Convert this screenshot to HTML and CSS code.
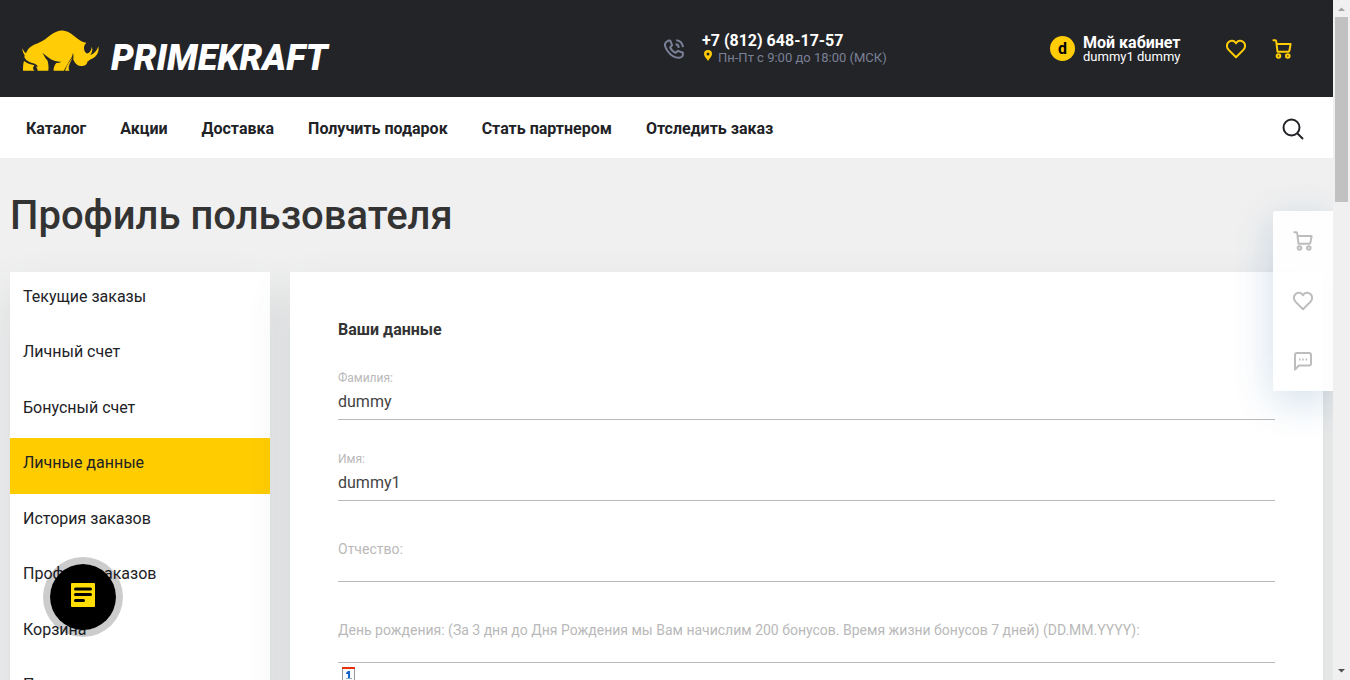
FILE: index.html
```html
<!DOCTYPE html>
<html lang="ru">
<head>
<meta charset="utf-8">
<meta name="viewport" content="width=device-width, initial-scale=1">
<title>Профиль пользователя</title>
<link rel="stylesheet" href="styles.css">
</head>
<body>
<svg class="sprite" aria-hidden="true">
  <symbol id="heart" viewBox="0 0 20 20"><path d="M10 18.3 2.6 10.9C.3 8.500.5 5 2.400 3.200 4.500 1.200 8 1.200 10 4.300c2-3.100 5.500-3.100 7.600-1.100 1.900 1.800 2.100 5.300-.2 7.700z"/></symbol>
  <symbol id="cart" viewBox="0 0 20 20"><path d="M.6 1.300H3.300Q4 1.300 4.200 2.300L5.500 12.700H16.300Q17.200 12.700 17.400 11.800L18.600 5H4.600"/><circle cx="6.500" cy="17" r="1.800"/><circle cx="15.800" cy="17" r="1.800"/></symbol>
</svg>
<div class="shell">
  <div class="page">
    <header class="topbar">
      <a class="logo" href="#">
        <svg class="rhino" viewBox="36 28 231 123" aria-hidden="true">
          <path d="M37 83C41 91 44 96 48 98C54 82 65 74 85 67C101 61 109 52 122 43C137 33 148 28 162 30C178 32 190 44 203 54C212 61 219 65 229 66C222 73 220 83 224 91C226 96 230 99 234 98C241 94 245 86 245 78C249 87 246 96 241 103C252 100 261 90 265 77C269 96 257 111 242 116L232 123C232 132 222 137 212 136C202 135 194 126 190 117C190 108 191 102 189 97C187 107 184 113 179 119C172 133 165 142 162 150H131C130 142 133 134 139 127C145 127 150 126 153 123C131 124 116 112 97 96C104 106 105 112 112 119C116 130 116 142 115 150H83C82 145 81 141 77 137L84 139C81 131 74 129 67 127C51 122 40 112 44 104C40 98 37 91 37 83Z"/>
          <path d="M42 121C50 128 62 131 73 134C70 139 68 142 70 146L73 150H39C39 141 39 130 42 121Z"/>
          <path d="M189 110C181 124 175 136 176 144L178 150H165C169 138 178 121 189 110Z"/>
        </svg>
        <span class="wordmark">PRIMEKRAFT</span>
      </a>
      <div class="contact">
        <svg class="icon-phone" viewBox="0 0 20 20" aria-hidden="true"><path d="M4.500 1.500 2 3.300C.2 5 1.200 8.500 3.400 11.800c2.600 3.800 7 7.200 12.100 7 1.500-.1 3.400-1.500 3.400-3v-2.100l-5-1.900-2.200 2c-2.300-1-4.800-3.500-5.500-5.500l1.900-2.100L6.300 1.700z"/><path d="M11.500 5.300q3 0 3.300 3.500M12.200 1.200q6 .6 6.800 7"/></svg>
        <div>
          <a class="phone" href="tel:+78126481757">+7 (812) 648-17-57</a>
          <div class="hours"><svg class="icon-pin" viewBox="0 0 8 11" aria-hidden="true"><path fill-rule="evenodd" d="M4 0a4 4 0 0 1 4 4c0 2.500-2.500 4.200-4 7C2.500 8.200 0 6.500 0 4a4 4 0 0 1 4-4zm0 2.400a1.500 1.500 0 1 0 0 3 1.500 1.500 0 0 0 0-3z"/></svg>Пн-Пт с 9:00 до 18:00 (МСК)</div>
        </div>
      </div>
      <a class="account" href="#">
        <span class="avatar">d</span>
        <span><strong class="account-title">Мой кабинет</strong><span class="account-name">dummy1 dummy</span></span>
      </a>
      <div class="shortcuts">
        <a href="#" aria-label="Избранное"><svg class="icon"><use href="#heart"/></svg></a>
        <a href="#" aria-label="Корзина"><svg class="icon"><use href="#cart"/></svg></a>
      </div>
    </header>
    <nav class="mainnav" aria-label="Главное меню">
      <a href="#">Каталог</a><a href="#">Акции</a><a href="#">Доставка</a><a href="#">Получить подарок</a><a href="#">Стать партнером</a><a href="#">Отследить заказ</a>
      <button class="search" type="button" aria-label="Поиск"><svg viewBox="0 0 22 22"><circle cx="9.500" cy="9.500" r="8"/><path d="m15.500 15.500 5.500 5.500"/></svg></button>
    </nav>
    <main class="content">
      <h1>Профиль пользователя</h1>
      <div class="columns">
        <nav class="side" aria-label="Личный кабинет">
          <a href="#">Текущие заказы</a>
          <a href="#">Личный счет</a>
          <a href="#">Бонусный счет</a>
          <a class="active" href="#">Личные данные</a>
          <a href="#">История заказов</a>
          <a href="#">Профили заказов</a>
          <a href="#">Корзина</a>
          <a href="#">Подписки</a>
        </nav>
        <form class="card">
          <h2>Ваши данные</h2>
          <div class="field"><label for="surname">Фамилия:</label><input id="surname" type="text" value="dummy"></div>
          <div class="field"><label for="name">Имя:</label><input id="name" type="text" value="dummy1"></div>
          <div class="field empty"><label for="middle">Отчество:</label><input id="middle" type="text"></div>
          <div class="field empty"><label for="birthday">День рождения: (За 3 дня до Дня Рождения мы Вам начислим 200 бонусов. Время жизни бонусов 7 дней) (DD.MM.YYYY):</label><input id="birthday" type="text"></div>
          <button class="calendar" type="button" aria-label="Выбрать дату"><svg viewBox="0 0 13 15"><path fill="#f8fafc" stroke="#999" d="M.5.5h12v14H.5z"/><path fill="#e8320c" d="M0 0h13v2H0z"/><path fill="#1462cc" d="M4 6l2-2h2v7H6V7H4z"/><path fill="#8fa9c8" d="M4 11h6v1H4z"/></svg></button>
        </form>
      </div>
    </main>
    <div class="dock">
      <a href="#" aria-label="Корзина"><svg class="icon"><use href="#cart"/></svg></a>
      <a href="#" aria-label="Избранное"><svg class="icon"><use href="#heart"/></svg></a>
      <button type="button" aria-label="Сообщения"><svg class="icon" viewBox="0 0 20 20"><path d="M2 18.500V4q0-2 2-2h12q2 0 2 2v8.500q0 2-2 2H6z"/><path d="M6 8.500h1.500M9.300 8.500h1.500M12.600 8.500h1.500"/></svg></button>
    </div>
    <button class="chat" type="button" aria-label="Чат"><svg viewBox="0 0 24 24"><rect width="24" height="24" rx="1"/><path d="M4.500 6h15M4.500 11.500h15M4.500 17.500h8"/></svg></button>
  </div>
  <div class="scrollbar" aria-hidden="true">
    <svg class="at-end" viewBox="0 0 17 17"><path d="M5 11 8.500 7.500 12 11z"/></svg>
    <span class="thumb"></span>
    <svg viewBox="0 0 17 17"><path d="M5 6h7L8.500 9.500z"/></svg>
  </div>
</div>
</body>
</html>
```
FILE: styles.css
```css
* { box-sizing: border-box; }
body { margin: 0; font: 16px/20px Roboto, sans-serif; color: #212226; background: #f0f0f0; }
a { color: inherit; text-decoration: none; }
button { border: 0; padding: 0; background: none; cursor: pointer; }
svg { display: block; }
.sprite { position: absolute; width: 0; height: 0; }
.shell { display: flex; height: 100vh; overflow: hidden; }
.page { position: relative; flex: 1; min-width: 0; overflow: hidden; }

.topbar { display: flex; align-items: center; height: 97px; padding: 0 41px 0 22px; background: #232428; color: #fff; }
.logo { display: flex; align-items: flex-end; gap: 12px; margin-top: 3px; flex: 1; }
.rhino { width: 77px; height: 41px; fill: #ffcc05; }
.wordmark { font: italic 900 36px/26px Roboto, sans-serif; }
.contact { display: flex; align-items: center; gap: 18px; width: 386px; }
.icon-phone { width: 20px; height: 20px; fill: none; stroke: #7a8096; stroke-width: 2; }
.phone { display: block; font-weight: 700; line-height: 18px; }
.hours { display: flex; align-items: center; gap: 6px; padding-left: 2px; font-size: 13px; line-height: 16px; color: #7a8096; }
.icon-pin { width: 8px; height: 11px; margin-bottom: 4px; fill: #ffcc05; }
.account { display: flex; align-items: center; gap: 8px; width: 176px; }
.avatar { width: 25px; height: 25px; border-radius: 50%; background: #ffcc05; color: #000; font-weight: 700; line-height: 25px; text-align: center; }
.account-title, .account-name { display: block; }
.account-title { line-height: 16px; }
.account-name { font-size: 13px; line-height: 12px; }
.shortcuts { display: flex; gap: 26px; color: #ffcc05; }
.icon { width: 20px; height: 20px; fill: none; stroke: currentColor; stroke-width: 2; stroke-linejoin: round; }

.mainnav { display: flex; align-items: center; gap: 34px; height: 61px; padding: 2px 29px 0 26px; background: #fff; font-weight: 700; }
.search { margin-left: auto; }
.search svg { width: 22px; height: 22px; fill: none; stroke: #212226; stroke-width: 2; }

.content { padding: 32px 10px 0; }
h1 { margin: 0 0 30px; font-size: 40px; font-weight: 500; line-height: 52px; color: #333; }
.columns { display: flex; gap: 20px; align-items: flex-start; }
.side, .card { background: #fff; box-shadow: 0 20px 40px rgba(70, 85, 95, 0.15); }
.side { width: 260px; flex: none; }
.side a { display: block; height: 55px; padding: 15px 13px; font-weight: 400; }
.side a:nth-child(even) { height: 56px; }
.side .active { background: #ffcc00; }
.card { flex: 1; min-width: 0; padding: 48px 48px 200px; }
h2 { margin: 0; font-size: 16px; font-weight: 700; line-height: 19px; color: #333; }
.field { display: flex; flex-direction: column; justify-content: flex-end; height: 81px; }
.field label { font-size: 12px; line-height: 16px; color: #b9b9b9; }
.field input { width: 100%; height: 34px; padding: 5px 0 7px; border: 0; border-bottom: 1px solid #b9b9b9; background: none; font: 16px Roboto, sans-serif; color: #444; outline: 0; }
.field.empty label { font-size: 14px; line-height: 20px; }
.field.empty input { height: 23px; padding: 0; }
.calendar { display: block; margin: 4px; }
.calendar svg { width: 13px; height: 15px; }

.dock { position: absolute; top: 211px; right: 0; width: 60px; color: #bdbdbd; background: rgba(255, 255, 255, 0.9); border-radius: 2px 0 0 2px; box-shadow: 0 10px 40px rgba(20, 90, 150, 0.2); }
.dock a, .dock button { display: grid; place-items: center; width: 60px; height: 60px; color: inherit; }
.chat { position: absolute; left: 43px; bottom: 43px; display: grid; place-items: center; width: 80px; height: 80px; border: 7px solid rgba(0, 0, 0, 0.2); border-radius: 50%; background: #000; background-clip: padding-box; }
.chat svg { width: 24px; height: 24px; margin-bottom: 4px; fill: #fd0; stroke: #000; stroke-width: 3; stroke-linecap: round; }
.chat rect { stroke: none; }

.scrollbar { display: flex; flex-direction: column; flex: none; width: 17px; background: #f0f0f0; }
.scrollbar svg { width: 17px; height: 17px; fill: #505050; }
.scrollbar .at-end { fill: #a3a3a3; }
.thumb { width: 13px; height: 185px; margin: 0 2px auto; background: #c1c1c1; }
```
